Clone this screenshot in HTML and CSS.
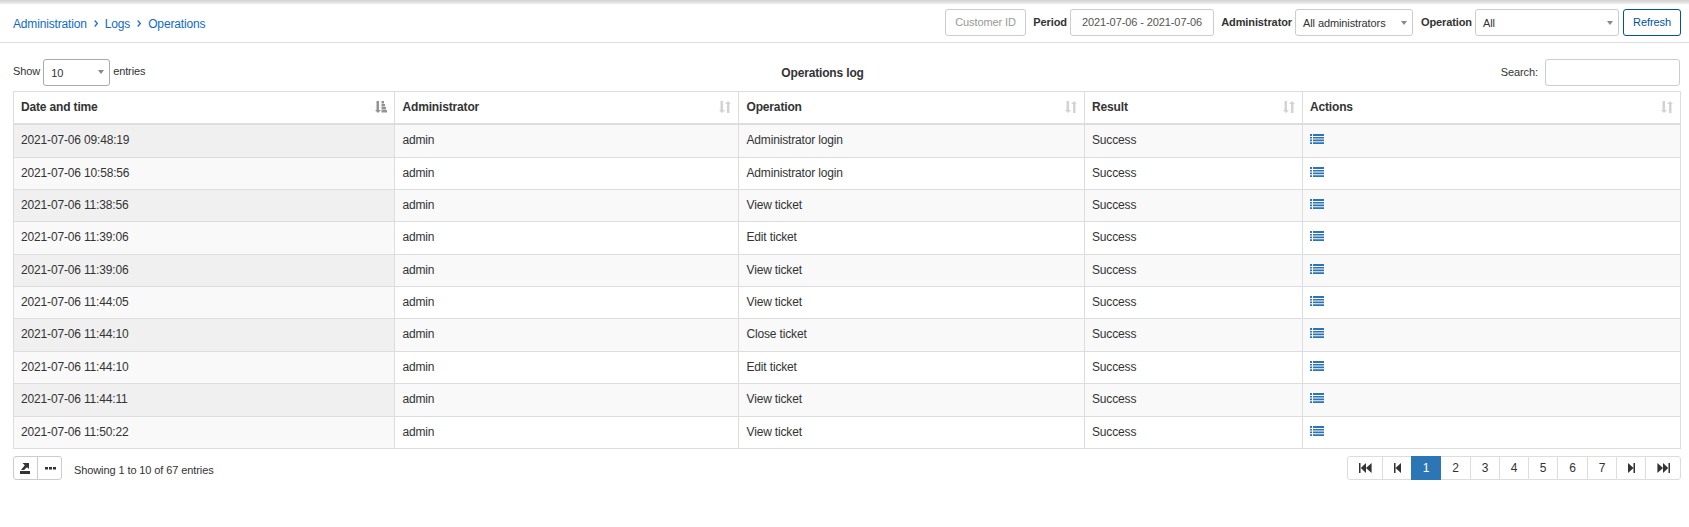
FILE: index.html
```html
<!DOCTYPE html>
<html lang="en">
<head>
<meta charset="utf-8">
<title>Operations log</title>
<link rel="stylesheet" href="styles.css">
</head>
<body>
<svg class="defs" width="0" height="0">
  <symbol id="list" viewBox="0 0 14 10"><path d="M0 0h2v2H0zM3 0h11v2H3zM0 3h2v1.6H0zM3 3h11v1.6H3zM0 5.6h2v1.6H0zM3 5.6h11v1.6H3zM0 8.2h2V10H0zM3 8.2h11V10H3z"/></symbol>
  <symbol id="sort" viewBox="0 0 12 12"><path d="M1.5 0h2.5v9h2L3 12 0 9h1.5zM8 12h2.5V3H12L9 0 6 3h2z"/></symbol>
  <symbol id="sorted" viewBox="0 0 12 12"><path d="M1.5 0h2.5v9h2L3 12 0 9h1.5zM6.5 0h2.5v2.4h-2.5zM6.5 3h3.5v2.4h-3.5zM6.5 6H11v2.4H6.5zM6.5 9H12v2.4H6.5z"/></symbol>
  <symbol id="first" viewBox="0 0 13 10"><path d="M0 0h1.5v10H0zM7 0v10L1.8 5zM12.6 0v10L7 5z"/></symbol>
  <symbol id="prev" viewBox="0 0 7 10"><path d="M0 0h1.5v10H0zM7 0v10L1.5 5z"/></symbol>
  <symbol id="export" viewBox="0 0 10 11"><path d="M0 8h10v3H0zM2.5 0H9v6L7 4.2 4 7H1l3.8-4.8z"/></symbol>
</svg>
<header class="topbar">
  <nav class="crumbs">
    <a>Administration</a><svg class="chev" viewBox="0 0 4 7"><path d="M.7.5l2.6 3-2.6 3"/></svg><a>Logs</a><svg class="chev" viewBox="0 0 4 7"><path d="M.7.5l2.6 3-2.6 3"/></svg><a>Operations</a>
  </nav>
  <form class="filters">
    <span class="field customer">Customer ID</span>
    <label class="l-period">Period</label><span class="field period">2021-07-06 - 2021-07-06</span>
    <label class="l-admin">Administrator</label><span class="field select admins">All administrators<i class="caret"></i></span>
    <label class="l-op">Operation</label><span class="field select ops">All<i class="caret"></i></span>
    <span class="field refresh">Refresh</span>
  </form>
</header>
<main class="content">
  <div class="toolbar">
    <div class="length">Show <span class="field select count">10<i class="caret"></i></span> entries</div>
    <h1>Operations log</h1>
    <div class="search">Search: <span class="field"></span></div>
  </div>
  <table class="log">
    <colgroup><col class="c1"><col class="c2"><col class="c3"><col class="c4"><col class="c5"></colgroup>
    <thead><tr>
      <th><div>Date and time<svg class="active"><use href="#sorted"/></svg></div></th>
      <th><div>Administrator<svg><use href="#sort"/></svg></div></th>
      <th><div>Operation<svg><use href="#sort"/></svg></div></th>
      <th><div>Result<svg><use href="#sort"/></svg></div></th>
      <th><div>Actions<svg><use href="#sort"/></svg></div></th>
    </tr></thead>
    <tbody>
      <tr class="tall"><td>2021-07-06 09:48:19</td><td>admin</td><td>Administrator login</td><td>Success</td><td><svg><use href="#list"/></svg></td></tr>
      <tr><td>2021-07-06 10:58:56</td><td>admin</td><td>Administrator login</td><td>Success</td><td><svg><use href="#list"/></svg></td></tr>
      <tr><td>2021-07-06 11:38:56</td><td>admin</td><td>View ticket</td><td>Success</td><td><svg><use href="#list"/></svg></td></tr>
      <tr class="tall"><td>2021-07-06 11:39:06</td><td>admin</td><td>Edit ticket</td><td>Success</td><td><svg><use href="#list"/></svg></td></tr>
      <tr><td>2021-07-06 11:39:06</td><td>admin</td><td>View ticket</td><td>Success</td><td><svg><use href="#list"/></svg></td></tr>
      <tr><td>2021-07-06 11:44:05</td><td>admin</td><td>View ticket</td><td>Success</td><td><svg><use href="#list"/></svg></td></tr>
      <tr class="tall"><td>2021-07-06 11:44:10</td><td>admin</td><td>Close ticket</td><td>Success</td><td><svg><use href="#list"/></svg></td></tr>
      <tr><td>2021-07-06 11:44:10</td><td>admin</td><td>Edit ticket</td><td>Success</td><td><svg><use href="#list"/></svg></td></tr>
      <tr class="tall"><td>2021-07-06 11:44:11</td><td>admin</td><td>View ticket</td><td>Success</td><td><svg><use href="#list"/></svg></td></tr>
      <tr><td>2021-07-06 11:50:22</td><td>admin</td><td>View ticket</td><td>Success</td><td><svg><use href="#list"/></svg></td></tr>
    </tbody>
  </table>
  <footer class="bottom">
    <div class="tools"><span><svg class="export"><use href="#export"/></svg></span><span><svg class="dots" viewBox="0 0 11 3"><path d="M0 0h3v2.5H0zM4 0h3v2.5H4zM8 0h3v2.5H8z"/></svg></span></div>
    <div class="info">Showing 1 to 10 of 67 entries</div>
    <div class="pager">
      <span class="end"><svg class="two"><use href="#first"/></svg></span><span class="step"><svg class="one"><use href="#prev"/></svg></span><span class="current">1</span><span>2</span><span>3</span><span>4</span><span>5</span><span>6</span><span>7</span><span><svg class="one flip"><use href="#prev"/></svg></span><span class="end"><svg class="two flip"><use href="#first"/></svg></span>
    </div>
  </footer>
</main>
</body>
</html>
```
FILE: styles.css
```css
* { box-sizing: border-box; }
body { margin: 0; background: #fff; color: #333; font: 12px/17px "Liberation Sans", Arial, sans-serif; letter-spacing: -0.16px; }
svg { display: block; fill: currentColor; }
.defs { position: absolute; }
.topbar { height: 43px; padding: 9px 8px 0 13px; display: flex; justify-content: space-between; border-bottom: 1px solid #ddd; background: linear-gradient(#d3d3d3, #dedede 2px, #fff 5px); }
.crumbs { display: flex; align-items: center; height: 29px; padding-top: 1px; color: #0f6ac7; }
.chev { width: 4px; height: 7px; margin: -2px 8px 0 7px; fill: none; stroke: #1a75cf; stroke-width: 1.3; }
.crumbs a:not(:first-child) { margin-left: -1px; }
.filters, .toolbar, .info { font-size: 11px; letter-spacing: -0.1px; }
.filters { display: flex; align-items: flex-start; }
.filters label { font-weight: bold; line-height: 27px; text-align: right; white-space: nowrap; }
.field { display: flex; align-items: center; justify-content: center; height: 27px; border: 1px solid #ccc; border-radius: 3px; white-space: nowrap; background: #fff; }
.customer { width: 81px; color: #999; }
.period { width: 144px; color: #555; }
.l-period { width: 41px; margin-right: 3px; }
.l-admin { width: 78px; margin-right: 3px; }
.l-op { width: 59px; margin-right: 3px; }
.select { justify-content: space-between; padding: 2px 5px 0 7px; }
.caret { border: 3.5px solid transparent; border-top: 4px solid #888; border-bottom: 0; margin-bottom: 1px; }
.admins { width: 118px; }
.ops { width: 144px; margin-right: 4px; }
.refresh { width: 58px; border-color: #00549b; color: #00549b; }
.content { padding: 16px 8px 0 13px; }
.toolbar { display: grid; grid-template-columns: 1fr auto 1fr; height: 32px; }
.length { display: flex; gap: 3px; line-height: 25px; }
.count { width: 67px; border-color: #aaa; }
.count .caret { margin-bottom: 3px; }
.toolbar h1 { margin: 0 49px 0 0; font-size: 12px; line-height: 29px; letter-spacing: -0.16px; }
.search { display: flex; justify-content: flex-end; gap: 7px; line-height: 27px; padding-right: 1px; }
.search .field { width: 135px; }
.log { width: 1668px; table-layout: fixed; border-collapse: separate; border-spacing: 0; border-top: 1px solid #ddd; border-left: 1px solid #ddd; }
.c1 { width: 381px; }
.c2 { width: 344px; }
.c3 { width: 346px; }
.c4 { width: 218px; }
.c5 { width: 378px; }
.log th, .log td { padding: 0 7px; text-align: left; border-right: 1px solid #ddd; border-bottom: 1px solid #ddd; }
.log tr > :nth-child(2), .log tr > :nth-child(3) { padding-left: 7.5px; }
.log th { height: 33px; border-bottom-width: 2px; padding-bottom: 1px; }
.log th div { display: flex; align-items: center; justify-content: space-between; }
.log th svg { width: 12px; height: 12px; color: #d3d3d3; }
.log th .active { color: #949494; }
.log td { height: 32px; }
.log .tall td { height: 33px; padding-bottom: 2px; }
.log td svg { width: 14px; height: 10px; color: #2b74b5; margin-top: -3px; }
.log .tall svg { margin-top: -2px; }
.log tbody tr:nth-child(odd) { background: #f9f9f9; }
.log tbody tr:nth-child(odd) td:first-child { background: #f0f0f0; }
.log tbody tr:nth-child(even) td:first-child { background: #f9f9f9; }
.bottom { display: flex; padding-top: 7px; }
.tools, .pager { display: flex; height: 24px; border: 1px solid #ccc; border-radius: 3px; }
.tools span, .pager span { display: flex; align-items: center; justify-content: center; }
.tools { width: 49px; }
.tools span { width: 23px; padding-right: 1px; }
.tools span + span { width: 24px; border-left: 1px solid #ccc; padding: 0 0 0 1px; }
.export { width: 10px; height: 11px; }
.dots { width: 11px; height: 3px; }
.info { margin-left: 12px; line-height: 28px; }
.pager { margin-left: auto; border-color: #ddd; }
.pager span { width: 29px; border-right: 1px solid #ddd; padding-top: 1px; }
.pager svg { margin-top: -1px; }
.pager .end { width: 35px; }
.pager .end:last-child { width: 34px; border-right: 0; }
.pager .current { width: 30px; background: #2c76b5; color: #fff; border: 0; margin: -1px 0; }
.pager .step { width: 28px; border-right: 0; }
.pager .current + span, .pager span:nth-child(8) { width: 30px; }
.two { width: 13px; height: 10px; }
.one { width: 7px; height: 10px; }
.flip { transform: scaleX(-1); }
```
